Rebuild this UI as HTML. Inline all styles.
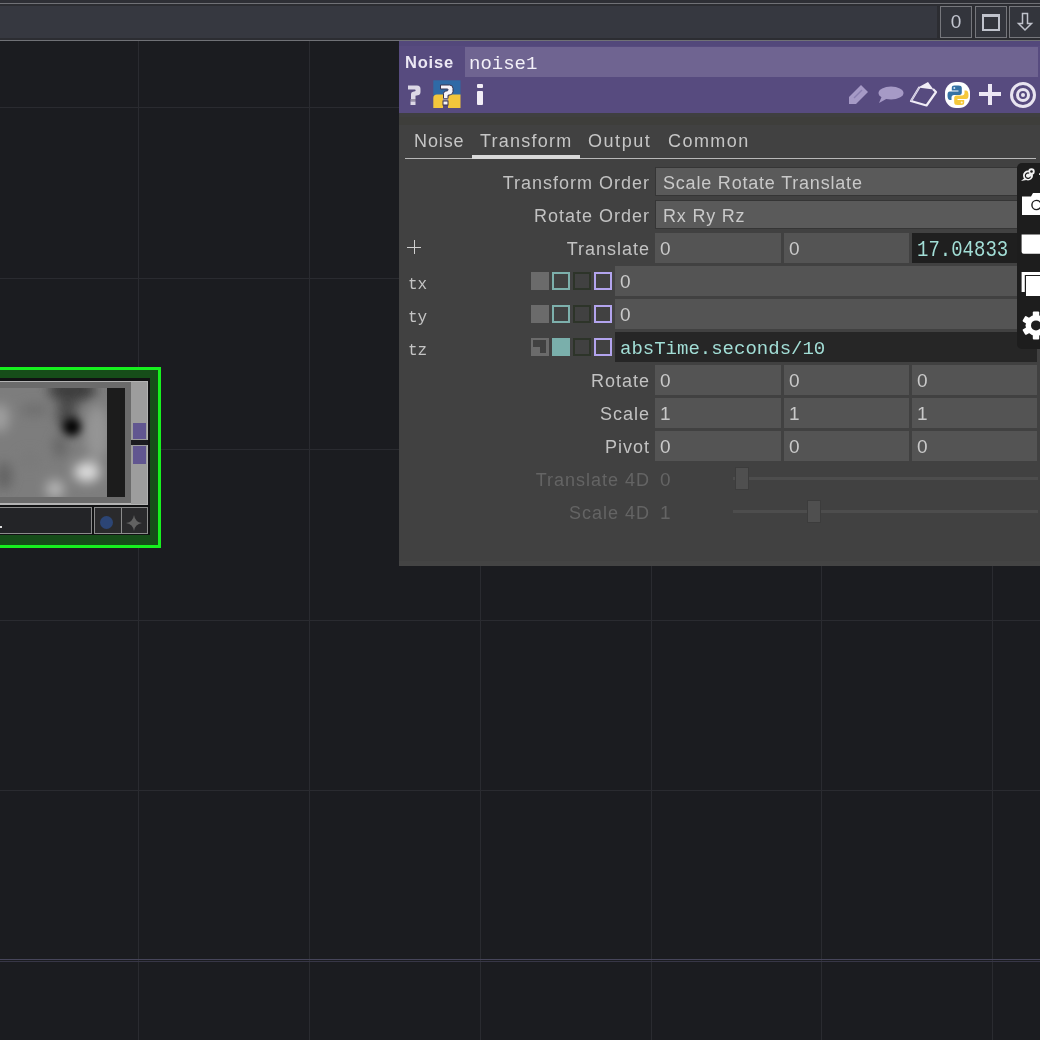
<!DOCTYPE html>
<html><head><meta charset="utf-8">
<style>
*{margin:0;padding:0;box-sizing:border-box}
html,body{width:1040px;height:1040px;overflow:hidden;background:#1b1c20;font-family:"Liberation Sans",sans-serif;position:relative}
.a{position:absolute}
.gv{position:absolute;top:41px;width:1px;height:999px;background:#2a2b30}
.gh{position:absolute;left:0;height:1px;width:1040px;background:#2a2b30}
/* top bar */
#top{position:absolute;left:0;top:0;width:1040px;height:41px;background:#363840}
.tbtn{position:absolute;top:6px;width:32px;height:32px;border:1px solid #76777c;background:#33353c}
/* panel */
#panel{position:absolute;left:399px;top:41px;width:641px;height:525px;background:#414141;overflow:hidden}
#hdr{position:absolute;left:0;top:0;width:641px;height:72px;background:#574b7f}
.lbl{position:absolute;right:390px;height:30px;line-height:30px;font-size:18px;letter-spacing:1px;color:#c2c2c2;white-space:nowrap;text-align:right}
.fld{position:absolute;height:30px;background:#545454;line-height:32px;font-size:19px;color:#c9c9c9;padding-left:5px;white-space:nowrap;overflow:hidden}
.dk{background:#262626;font-family:"Liberation Mono",monospace;color:#a2ded6}
.mono{font-family:"Liberation Mono",monospace}
.sq{position:absolute;width:18px;height:18px}
.tab{position:absolute;top:85px;font-size:18px;letter-spacing:0.9px;color:#c6c6c6;white-space:nowrap;line-height:30px;height:30px}
</style></head><body><div id="root" style="position:absolute;left:0;top:0;width:1040px;height:1040px;overflow:hidden;will-change:transform">
<!-- grid -->
<div class="gv" style="left:138px"></div>
<div class="gv" style="left:309px"></div>
<div class="gv" style="left:480px"></div>
<div class="gv" style="left:651px"></div>
<div class="gv" style="left:821px"></div>
<div class="gv" style="left:992px"></div>
<div class="gh" style="top:107px"></div>
<div class="gh" style="top:278px"></div>
<div class="gh" style="top:449px"></div>
<div class="gh" style="top:620px"></div>
<div class="gh" style="top:790px"></div>
<div class="gh" style="top:959px;background:#46455a"></div>
<div class="gh" style="top:961px;background:#373646"></div>

<!-- top bar -->
<div id="top">
  <div class="a" style="left:0;top:0;width:1040px;height:3px;background:#2e2f35"></div>
  <div class="a" style="left:0;top:3px;width:1040px;height:1px;background:#707176"></div>
  <div class="a" style="left:0;top:4px;width:1040px;height:2px;background:#2c2d32"></div>
  <div class="a" style="left:0;top:38px;width:1040px;height:2px;background:#2c2d32"></div>
  <div class="a" style="left:0;top:40px;width:1040px;height:1px;background:#707176"></div>
  <div class="a" style="left:937px;top:4px;width:103px;height:36px;background:#2c2d32"></div>
  <div class="tbtn" style="left:940px"><div class="a" style="left:0;top:0;width:30px;height:30px;line-height:30px;text-align:center;font-size:19px;color:#c3c6d0">0</div></div>
  <div class="tbtn" style="left:975px"><div class="a" style="left:6px;top:7px;width:18px;height:17px;border:2px solid #c0c3cc;border-top-width:3px"></div></div>
  <div class="tbtn" style="left:1009px;width:40px">
    <svg class="a" style="left:6px;top:4px" width="20" height="22" viewBox="0 0 20 22"><path d="M6.5 2.5 H11.5 V12.5 H15.5 L9 19 L2.5 12.5 H6.5 Z" fill="none" stroke="#c0c3cc" stroke-width="1.5" stroke-linejoin="miter"/></svg>
  </div>
</div>

<!-- node -->
<div class="a" style="left:-10px;top:367px;width:171px;height:181px;background:#17f01f"></div>
<div class="a" style="left:-10px;top:370px;width:168px;height:175px;background:#164d19"></div>
<div class="a" style="left:-10px;top:378px;width:160px;height:157px;background:#111213"></div>
<div class="a" style="left:-10px;top:381px;width:158px;height:124px;background:#b3b3b3"></div>
<div class="a" style="left:-10px;top:382px;width:141px;height:121px;background:#6b6b6b"></div>
<div class="a" style="left:131px;top:382px;width:16px;height:122px;background:#9d9d9d"></div>
<div class="a" style="left:133px;top:423px;width:13px;height:16px;background:#615690"></div>
<div class="a" style="left:131px;top:440px;width:17px;height:5px;background:#1b1b20"></div>
<div class="a" style="left:133px;top:446px;width:13px;height:18px;background:#615690"></div>
<div class="a" style="left:107px;top:388px;width:18px;height:109px;background:#1c1c1c"></div>
<!-- noise image -->
<svg class="a" style="left:0;top:388px" width="107" height="109" viewBox="0 0 107 109">
  <defs><filter id="bl" x="-50%" y="-50%" width="200%" height="200%"><feGaussianBlur stdDeviation="6"/></filter>
  <filter id="bl2" x="-50%" y="-50%" width="200%" height="200%"><feGaussianBlur stdDeviation="4"/></filter></defs>
  <rect width="107" height="109" fill="#7d7d7d"/>
  <g filter="url(#bl)">
    <ellipse cx="97" cy="45" rx="12" ry="28" fill="#959595"/>
    <ellipse cx="0" cy="30" rx="9" ry="14" fill="#a0a0a0"/>
    <ellipse cx="34" cy="22" rx="14" ry="6" fill="#6e6e6e"/>
    <ellipse cx="72" cy="2" rx="24" ry="12" fill="#3c3c3c"/>
    <ellipse cx="67" cy="26" rx="10" ry="16" fill="#4a4a4a"/>
    <ellipse cx="60" cy="58" rx="7" ry="12" fill="#666"/>
    <ellipse cx="4" cy="88" rx="8" ry="14" fill="#626262"/>
    <ellipse cx="87" cy="84" rx="13" ry="10" fill="#dedede"/>
    <ellipse cx="55" cy="101" rx="9" ry="9" fill="#b8b8b8"/>
    <ellipse cx="30" cy="72" rx="12" ry="9" fill="#7a7a7a"/>
  </g>
  <g filter="url(#bl2)">
    <circle cx="72" cy="39" r="9" fill="#000"/>
  </g>
</svg>
<!-- node bottom bar -->
<div class="a" style="left:-10px;top:507px;width:102px;height:27px;border:1px solid #8c8c8c;background:#232427"></div>
<div class="a" style="left:0;top:526px;width:2px;height:2px;background:#ddd"></div>
<div class="a" style="left:94px;top:507px;width:54px;height:27px;border:1px solid #8c8c8c;background:#2a2a2c"></div>
<div class="a" style="left:121px;top:508px;width:1px;height:25px;background:#8c8c8c"></div>
<div class="a" style="left:100px;top:516px;width:13px;height:13px;border-radius:50%;background:#2c4575"></div>
<svg class="a" style="left:125px;top:514px" width="18" height="18" viewBox="0 0 18 18"><path d="M9 1 Q10 8 17 9 Q10 10 9 17 Q8 10 1 9 Q8 8 9 1Z" fill="#626262"/></svg>

<!-- panel -->
<div id="panel">
  <div id="hdr">
    <div class="a" style="left:0;top:0;width:641px;height:5px;background:#53487b"></div>
    <div class="a" style="left:6px;top:8px;font-size:16.5px;font-weight:bold;letter-spacing:0.8px;color:#ece8f4;line-height:26px">Noise</div>
    <div class="a" style="left:66px;top:6px;width:573px;height:30px;background:#6f6491"></div>
    <div class="a mono" style="left:70px;top:7.5px;height:30px;line-height:30px;font-size:19px;color:#f3f0f8">noise1</div>
    <!-- help icons -->
    <svg class="a" style="left:5px;top:41px" width="20" height="26" viewBox="0 0 20 26"><path d="M4 3.5 H13 Q16.5 3.5 16.5 7 V10 Q16.5 12.8 13.8 13.3 L11.5 13.8 V17 H7 V12 Q7 10.2 9 9.7 L11 9.2 Q11.6 9 11.6 8.2 Q11.6 7.5 10.8 7.5 H4 Z" fill="#dcd8e6"/><rect x="6.5" y="17" width="5" height="2.5" fill="#9a94a8"/><rect x="6.5" y="19.5" width="5" height="3.5" fill="#dcd8e6"/></svg>
    <svg class="a" style="left:31px;top:37px" width="34" height="34" viewBox="0 0 34 34"><rect x="3.3" y="2.3" width="27.2" height="15" fill="#2f6aa6"/><path d="M3.3 30 V20 Q3.3 16.5 7 16.5 H13 V30 Z" fill="#f3c63c"/><path d="M18 30 V20 Q18 16.5 22 16.5 H30.5 V30 Z" fill="#f3c63c"/><g transform="translate(6.5,3.5)"><path d="M4 3.5 H13 Q16.5 3.5 16.5 7 V10 Q16.5 12.8 13.8 13.3 L11.5 13.8 V17 H7 V12 Q7 10.2 9 9.7 L11 9.2 Q11.6 9 11.6 8.2 Q11.6 7.5 10.8 7.5 H4 Z" fill="#f6f4fa" stroke="#3a3550" stroke-width="1"/><rect x="6.5" y="17" width="5" height="2.5" fill="#9a94a8"/><rect x="6.5" y="19.5" width="5" height="4" fill="#f6f4fa" stroke="#3a3550" stroke-width="1"/></g></svg>
    <div class="a" style="left:78px;top:43px;width:6px;height:4px;background:#f2eef6;border-radius:1px"></div>
    <div class="a" style="left:78px;top:49.5px;width:6px;height:14.5px;background:#f2eef6;border-radius:1px"></div>
    <!-- right icons -->
    <svg class="a" style="left:449px;top:43px" width="21" height="21" viewBox="0 0 21 21"><path d="M1 20 L1 13 L13 1 L20 8 L8 20 Z" fill="#a69ac6"/><path d="M6 14 L14 6" stroke="#8a7fb0" stroke-width="1.5"/></svg>
    <svg class="a" style="left:479px;top:45px" width="26" height="18" viewBox="0 0 26 18"><ellipse cx="13" cy="7" rx="12.5" ry="6.5" fill="#a69ac6"/><path d="M4 10 L1 17 L10 12 Z" fill="#a69ac6"/></svg>
    <svg class="a" style="left:506px;top:37px" width="36" height="32" viewBox="0 0 36 32"><path d="M14.5 9 L6 23 L21.5 27.5 L31 14 L28 11" fill="none" stroke="#f0ecf6" stroke-width="2.2" stroke-linejoin="round"/><path d="M14.5 9 L6 23" fill="none" stroke="#c9c3dc" stroke-width="1.4"/><path d="M13 9.5 L28.5 11.5 L23 4 Z" fill="#f0ecf6"/></svg>
    <div class="a" style="left:546px;top:41px;width:25px;height:26px;border-radius:11px;background:#fff"></div>
    <svg class="a" style="left:547px;top:42px" width="24" height="24" viewBox="0 0 24 24"><path d="M8.5 2.5 C6.5 2.5 5.8 3.3 5.8 5 V7.5 H12.5 V8.5 H4 C2 8.5 1.5 10 1.5 12.5 C1.5 15 2.3 17 4.2 17 H5.5 V14.5 C5.5 13 6.5 12 8 12 H13.5 C15 12 15.8 11 15.8 9.6 V5 C15.8 3.3 14.8 2.5 12.5 2.5 Z" fill="#3572a5"/><circle cx="8.3" cy="4.9" r="1" fill="#cfe3f3"/><path d="M15.5 22 C17.5 22 18.2 21.2 18.2 19.5 V17 H11.5 V16 H20 C22 16 22.5 14.5 22.5 12 C22.5 9.5 21.7 7.5 19.8 7.5 H18.5 V10 C18.5 11.5 17.5 12.5 16 12.5 H10.5 C9 12.5 8.2 13.5 8.2 14.9 V19.5 C8.2 21.2 9.2 22 11.5 22 Z" fill="#f5c83b"/><circle cx="15.7" cy="19.6" r="1" fill="#fff7d0"/></svg>
    <div class="a" style="left:580px;top:51px;width:22px;height:4px;background:#ece8f4"></div>
    <div class="a" style="left:589px;top:43px;width:4px;height:21px;background:#ece8f4"></div>
    <div class="a" style="left:611px;top:41px;width:26px;height:26px;border-radius:50%;border:3px solid #e8e4f0"></div>
    <div class="a" style="left:617px;top:47px;width:14px;height:14px;border-radius:50%;border:3px solid #e8e4f0"></div>
    <div class="a" style="left:622px;top:52px;width:4px;height:4px;border-radius:50%;background:#e8e4f0"></div>
  </div>
  <!-- tabs -->
  <div class="a" style="left:0;top:72px;width:641px;height:4px;background:#3f3f40"></div><div class="a" style="left:0;top:76px;width:641px;height:8px;background:#3e3e3b"></div>
  <div class="tab" style="left:15px">Noise</div>
  <div class="tab" style="left:81px;letter-spacing:1.25px">Transform</div>
  <div class="tab" style="left:189px;letter-spacing:1.55px">Output</div>
  <div class="tab" style="left:269px;letter-spacing:1.45px">Common</div>
  <div class="a" style="left:6px;top:117px;width:631px;height:1px;background:#b8b8b8"></div>
  <div class="a" style="left:73px;top:114px;width:108px;height:4px;background:#d9d9d9"></div>

  <!-- params: coordinates relative to panel (x-399, y-41) -->
  <div class="lbl" style="top:127px">Transform Order</div>
  <div class="a" style="left:256px;top:126px;width:382px;height:29px;background:#353535"></div>
  <div class="fld" style="left:257px;top:127px;width:381px;height:27px;line-height:30px;background:#5a5a5a;font-size:18px;letter-spacing:0.8px;padding-left:7px">Scale Rotate Translate</div>
  <div class="lbl" style="top:160px">Rotate Order</div>
  <div class="a" style="left:256px;top:159px;width:382px;height:29px;background:#353535"></div>
  <div class="fld" style="left:257px;top:160px;width:381px;height:27px;line-height:30px;background:#5a5a5a;font-size:18px;letter-spacing:0.8px;padding-left:7px">Rx Ry Rz</div>

  <div class="a" style="left:8px;top:206px;width:14px;height:1px;background:#cfcfcf"></div>
  <div class="a" style="left:15px;top:199px;width:1px;height:14px;background:#cfcfcf"></div>
  <div class="lbl" style="top:193px">Translate</div>
  <div class="fld" style="left:256px;top:192px;width:126px">0</div>
  <div class="fld" style="left:385px;top:192px;width:125px">0</div>
  <div class="fld dk" style="left:513px;top:192px;width:125px;padding-left:5px;background:#1f1f1f"><span style="display:inline-block;transform:scaleY(1.16);transform-origin:0 8px">17.04833</span></div>

  <div class="a mono" style="left:9px;top:229px;line-height:30px;font-size:16px;color:#c4c4c4">tx</div>
  <div class="a mono" style="left:9px;top:262px;line-height:30px;font-size:16px;color:#c4c4c4">ty</div>
  <div class="a mono" style="left:9px;top:295px;line-height:30px;font-size:16px;color:#c4c4c4">tz</div>

  <!-- squares rows -->
  <div class="sq" style="left:132px;top:231px;background:#6b6b6b"></div>
  <div class="sq" style="left:153px;top:231px;border:2px solid #7db0ac;background:#414141"></div>
  <div class="sq" style="left:174px;top:231px;border:2px solid #2d3429;background:#414141"></div>
  <div class="sq" style="left:195px;top:231px;border:2px solid #b3a4ee;background:#414141"></div>
  <div class="fld" style="left:216px;top:225px;width:422px">0</div>

  <div class="sq" style="left:132px;top:264px;background:#6b6b6b"></div>
  <div class="sq" style="left:153px;top:264px;border:2px solid #7db0ac;background:#414141"></div>
  <div class="sq" style="left:174px;top:264px;border:2px solid #2d3429;background:#414141"></div>
  <div class="sq" style="left:195px;top:264px;border:2px solid #b3a4ee;background:#414141"></div>
  <div class="fld" style="left:216px;top:258px;width:422px">0</div>

  <div class="sq" style="left:132px;top:297px;background:#6b6b6b"><div class="a" style="left:2px;top:2px;width:13px;height:13px;background:#414141"></div><div class="a" style="left:2px;top:9px;width:7px;height:6px;background:#6b6b6b"></div></div>
  <div class="sq" style="left:153px;top:297px;background:#7aafab"></div>
  <div class="sq" style="left:174px;top:297px;border:2px solid #2d3429;background:#414141"></div>
  <div class="sq" style="left:195px;top:297px;border:2px solid #b3a4ee;background:#414141"></div>
  <div class="fld dk" style="left:216px;top:291px;width:422px;line-height:34px">absTime.seconds/10</div>

  <div class="lbl" style="top:325px">Rotate</div>
  <div class="fld" style="left:256px;top:324px;width:126px">0</div>
  <div class="fld" style="left:385px;top:324px;width:125px">0</div>
  <div class="fld" style="left:513px;top:324px;width:125px">0</div>
  <div class="lbl" style="top:358px">Scale</div>
  <div class="fld" style="left:256px;top:357px;width:126px">1</div>
  <div class="fld" style="left:385px;top:357px;width:125px">1</div>
  <div class="fld" style="left:513px;top:357px;width:125px">1</div>
  <div class="lbl" style="top:391px">Pivot</div>
  <div class="fld" style="left:256px;top:390px;width:126px">0</div>
  <div class="fld" style="left:385px;top:390px;width:125px">0</div>
  <div class="fld" style="left:513px;top:390px;width:125px">0</div>

  <div class="a" style="left:0;top:520px;width:641px;height:5px;background:#444444"></div>
  <div class="lbl" style="top:424px;color:#646464">Translate 4D</div>
  <div class="a" style="left:261px;top:424px;line-height:30px;font-size:19px;color:#646464">0</div>
  <div class="a" style="left:334px;top:436px;width:305px;height:3px;background:#4d4d4d"></div>
  <div class="a" style="left:336px;top:426px;width:14px;height:23px;background:#4f4f4f;border:1px solid #3c3c3c"></div>
  <div class="lbl" style="top:457px;color:#646464">Scale 4D</div>
  <div class="a" style="left:261px;top:457px;line-height:30px;font-size:19px;color:#646464">1</div>
  <div class="a" style="left:334px;top:469px;width:305px;height:3px;background:#4d4d4d"></div>
  <div class="a" style="left:408px;top:459px;width:14px;height:23px;background:#4f4f4f;border:1px solid #3c3c3c"></div>
</div>

<!-- right floating toolbar -->
<div class="a" style="left:1017px;top:163px;width:40px;height:186px;background:#1d1d1d;border-radius:5px"></div>
<svg class="a" style="left:1015px;top:162px" width="25" height="190" viewBox="0 0 25 190">
  <g fill="#f2f2f2">
    <circle cx="13" cy="13.5" r="5"/>
    <circle cx="16.5" cy="9.5" r="3.2"/>
    <path d="M9.5 16 L6 19 L11.5 18 Z"/>
    <rect x="24" y="11.3" width="1.6" height="1.6"/>
  </g>
  <path d="M14.2 11.2 A2.7 2.7 0 1 0 15.6 14.6" fill="none" stroke="#1d1d1d" stroke-width="1.2"/>
  <circle cx="16.5" cy="9.5" r="1.3" fill="#1d1d1d"/>
  <path d="M7 34.5 H16 L18 31 H25 V53 H7 Z" fill="#ffffff"/>
  <circle cx="21.5" cy="43" r="4.6" fill="none" stroke="#1d1d1d" stroke-width="1.4"/>
  <path d="M6.6 72.6 H25 V91.8 H8.6 Q6.6 91.8 6.6 89.8 Z" fill="#fff"/>
  <path d="M6.6 109.9 H25 V113 H9.8 V130 H6.6 Z" fill="#fff"/>
  <rect x="10.2" y="113.5" width="14.8" height="20.5" fill="#1d1d1d"/>
  <rect x="11" y="114" width="14" height="20" fill="#fff"/>
  <g transform="translate(21,163.4)">
    <circle r="10.5" fill="#fff"/>
    <g fill="#fff">
      <rect x="-3.2" y="-14" width="6.4" height="6" rx="1"/>
      <rect x="-3.2" y="8" width="6.4" height="6" rx="1"/>
      <g transform="rotate(60)"><rect x="-3.2" y="-14" width="6.4" height="6" rx="1"/><rect x="-3.2" y="8" width="6.4" height="6" rx="1"/></g>
      <g transform="rotate(120)"><rect x="-3.2" y="-14" width="6.4" height="6" rx="1"/><rect x="-3.2" y="8" width="6.4" height="6" rx="1"/></g>
    </g>
    <circle r="5" fill="#1d1d1d"/>
  </g>
</svg>
</div></body></html>
